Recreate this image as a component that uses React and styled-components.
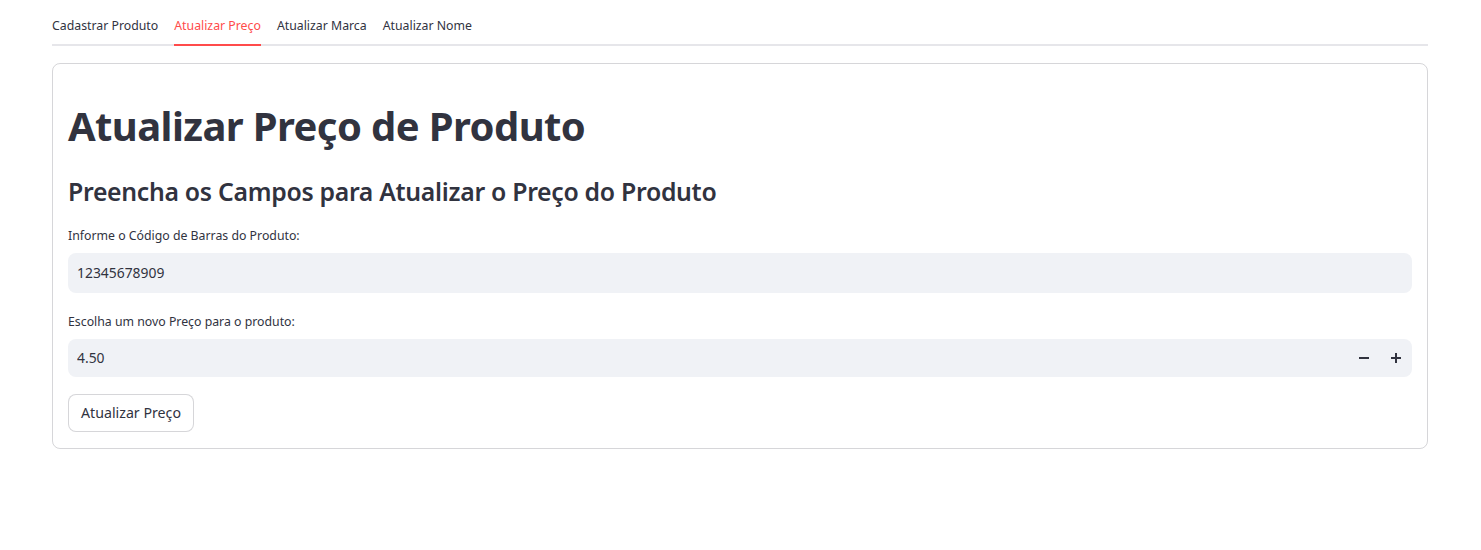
import React, { useState } from 'react';
import styled, { createGlobalStyle, css } from 'styled-components';

const Global = createGlobalStyle`
  body {
    margin: 0;
    background: #ffffff;
    font-family: 'Source Sans Pro', 'Noto Sans', sans-serif;
    color: #31333f;
  }
`;

const Main = styled.div`
  padding: 6px 53px 0 52px;
`;

const TabList = styled.div`
  display: flex;
  gap: 16px;
  border-bottom: 2px solid #e6e6ea;
`;
const Tab = styled.div`
  font-size: 12.3px;
  height: 38px;
  display: flex;
  align-items: center;
  margin-bottom: -2px;
  cursor: pointer;
  color: #31333f;
  border-bottom: 2px solid transparent;
  ${(p) =>
    p.active &&
    css`
      color: #ff4b4b;
      border-bottom-color: #ff4b4b;
    `}
`;

const Card = styled.div`
  margin-top: 17px;
  border: 1px solid rgba(49, 51, 63, 0.2);
  border-radius: 8px;
  padding: 16px 15px 16px 15px;
  display: flex;
  flex-direction: column;
`;
const Title = styled.h1`
  margin: 0;
  padding: 22px 0 16px 0;
  font-size: 40px;
  font-weight: 700;
  line-height: 1.2;
  letter-spacing: -0.6px;
`;
const Subtitle = styled.h3`
  margin: 0;
  padding: 11px 0 0 0;
  font-size: 24.8px;
  font-weight: 600;
  line-height: 1.2;
  letter-spacing: -0.3px;
`;
const Field = styled.div`
  display: flex;
  flex-direction: column;
  margin-top: 19px;
`;
const Label = styled.label`
  font-size: 12.3px;
  line-height: 20px;
  height: 20px;
  margin-bottom: 7px;
`;
const InputBox = styled.div`
  display: flex;
  align-items: center;
  height: ${(p) => p.h}px;
  background: #f0f2f6;
  border-radius: 8px;
`;
const Input = styled.input`
  flex: 1;
  border: none;
  outline: none;
  background: transparent;
  font-family: inherit;
  font-size: 13.9px;
  color: #31333f;
  padding: 0 9px;
  height: 100%;
`;
const Step = styled.button`
  width: 32px;
  height: 100%;
  border: none;
  background: transparent;
  display: flex;
  align-items: center;
  justify-content: center;
  padding: 0;
  cursor: pointer;
  color: #31333f;
`;
const Button = styled.button`
  align-self: flex-start;
  margin-top: 17px;
  height: 38px;
  padding: 0 12px;
  border: 1px solid rgba(49, 51, 63, 0.2);
  border-radius: 8px;
  background: #fff;
  font-family: inherit;
  font-size: 14.2px;
  color: #31333f;
  cursor: pointer;
`;

const tabs = ['Cadastrar Produto', 'Atualizar Preço', 'Atualizar Marca', 'Atualizar Nome'];

const App = () => {
  const [active, setActive] = useState(1);
  const [code, setCode] = useState('12345678909');
  const [price, setPrice] = useState(4.5);

  return (
    <Main>
      <Global />
      <TabList>
        {tabs.map((t, i) => (
          <Tab key={t} active={i === active} onClick={() => setActive(i)}>
            {t}
          </Tab>
        ))}
      </TabList>
      <Card>
        <Title>Atualizar Preço de Produto</Title>
        <Subtitle>Preencha os Campos para Atualizar o Preço do Produto</Subtitle>
        <Field>
          <Label>Informe o Código de Barras do Produto:</Label>
          <InputBox h={40}>
            <Input value={code} onChange={(e) => setCode(e.target.value)} />
          </InputBox>
        </Field>
        <Field>
          <Label>Escolha um novo Preço para o produto:</Label>
          <InputBox h={38}>
            <Input value={price.toFixed(2)} readOnly />
            <Step onClick={() => setPrice(Math.max(0, price - 0.01))}>
              <svg width="10" height="10" viewBox="0 0 10 10">
                <rect x="0" y="4" width="10" height="2" fill="currentColor" />
              </svg>
            </Step>
            <Step onClick={() => setPrice(price + 0.01)}>
              <svg width="10" height="10" viewBox="0 0 10 10">
                <rect x="0" y="4" width="10" height="2" fill="currentColor" />
                <rect x="4" y="0" width="2" height="10" fill="currentColor" />
              </svg>
            </Step>
          </InputBox>
        </Field>
        <Button>Atualizar Preço</Button>
      </Card>
    </Main>
  );
};

export default App;
